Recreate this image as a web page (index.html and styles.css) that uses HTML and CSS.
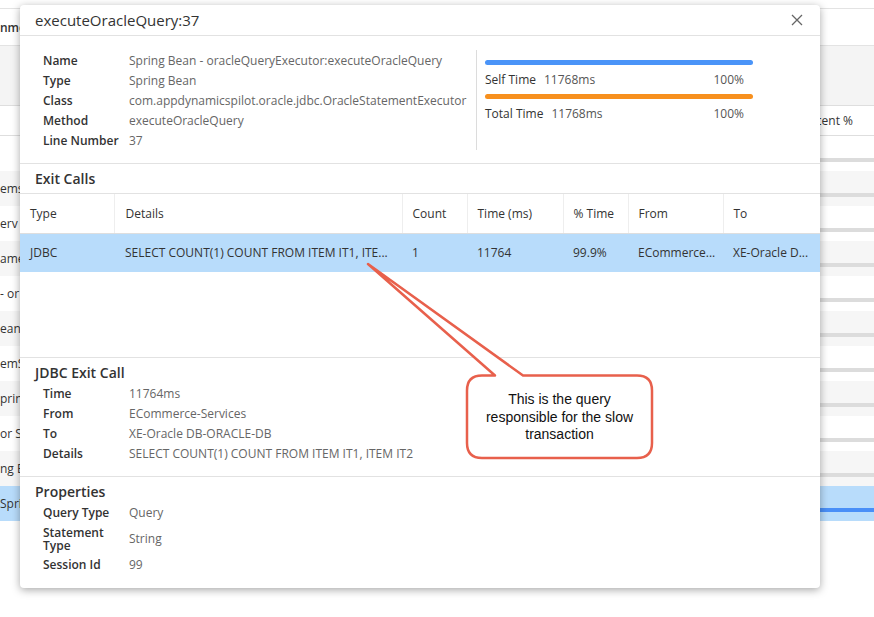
FILE: index.html
```html
<!DOCTYPE html>
<html>
<head>
<meta charset="utf-8">
<title>executeOracleQuery:37</title>
<link rel="stylesheet" href="styles.css">
</head>
<body>
<div class="page">
  <div class="toolbar"><span class="cut">nme</span></div>
  <div class="filters"></div>
  <div class="thead"><span class="pct-head">Percent %</span></div>
  <div class="rows">
    <div class="row"><span class="cut"></span><span class="pct"><i class="track"></i></span></div>
    <div class="row alt"><span class="cut">ems</span><span class="pct"><i class="track"></i></span></div>
    <div class="row"><span class="cut">erv</span><span class="pct"><i class="track"></i></span></div>
    <div class="row alt"><span class="cut">ame</span><span class="pct"><i class="track"></i></span></div>
    <div class="row"><span class="cut">- or</span><span class="pct"><i class="track"></i></span></div>
    <div class="row alt"><span class="cut">ean</span><span class="pct"><i class="track"></i></span></div>
    <div class="row"><span class="cut">emS</span><span class="pct"><i class="track"></i></span></div>
    <div class="row alt"><span class="cut">prin</span><span class="pct"><i class="track"></i></span></div>
    <div class="row"><span class="cut">or Sp</span><span class="pct"><i class="track"></i></span></div>
    <div class="row alt"><span class="cut">ng B</span><span class="pct"><i class="track"></i></span></div>
    <div class="row sel"><span class="cut">Sprin</span><span class="pct"><i class="track fill"></i></span></div>
  </div>
</div>

<div class="modal">
  <div class="modal-head">
    <span class="modal-title">executeOracleQuery:37</span>
    <svg class="close" width="12" height="12" viewBox="0 0 12 12"><path d="M1 1L11 11M11 1L1 11" stroke="#666" stroke-width="1.3" fill="none"/></svg>
  </div>

  <div class="info">
    <div class="props">
      <span class="k">Name</span><span class="v">Spring Bean - oracleQueryExecutor:executeOracleQuery</span>
      <span class="k">Type</span><span class="v">Spring Bean</span>
      <span class="k">Class</span><span class="v">com.appdynamicspilot.oracle.jdbc.OracleStatementExecutor</span>
      <span class="k">Method</span><span class="v">executeOracleQuery</span>
      <span class="k">Line Number</span><span class="v">37</span>
    </div>
    <div class="stats">
      <div class="bar blue"></div>
      <div class="stat-row"><span class="stat-k">Self Time</span><span class="stat-v">11768ms</span><span class="stat-p">100%</span></div>
      <div class="bar orange"></div>
      <div class="stat-row"><span class="stat-k">Total Time</span><span class="stat-v">11768ms</span><span class="stat-p">100%</span></div>
    </div>
  </div>

  <div class="section-title exit-title">Exit Calls</div>
  <div class="table-wrap">
    <table class="calls">
      <thead>
        <tr>
          <th class="c-type">Type</th>
          <th class="c-det">Details</th>
          <th class="c-cnt">Count</th>
          <th class="c-time">Time (ms)</th>
          <th class="c-pct">% Time</th>
          <th class="c-from">From</th>
          <th class="c-to">To</th>
        </tr>
      </thead>
      <tbody>
        <tr class="selected">
          <td>JDBC</td>
          <td>SELECT COUNT(1) COUNT FROM ITEM IT1, ITE...</td>
          <td>1</td>
          <td>11764</td>
          <td>99.9%</td>
          <td>ECommerce...</td>
          <td>XE-Oracle D...</td>
        </tr>
      </tbody>
    </table>
  </div>

  <div class="detail">
    <div class="section-title">JDBC Exit Call</div>
    <div class="props">
      <span class="k">Time</span><span class="v">11764ms</span>
      <span class="k">From</span><span class="v">ECommerce-Services</span>
      <span class="k">To</span><span class="v">XE-Oracle DB-ORACLE-DB</span>
      <span class="k">Details</span><span class="v">SELECT COUNT(1) COUNT FROM ITEM IT1, ITEM IT2</span>
    </div>
  </div>

  <div class="detail last">
    <div class="section-title">Properties</div>
    <div class="props">
      <span class="k">Query Type</span><span class="v">Query</span>
      <span class="k wrap">Statement Type</span><span class="v">String</span>
      <span class="k">Session Id</span><span class="v">99</span>
    </div>
  </div>
</div>

<svg class="callout-shape" width="874" height="617" viewBox="0 0 874 617">
  <path d="M482 375.5 L495 375.5 L368 264 L523 375.5 L637 375.5 Q652 375.5 652 390.5 L652 443 Q652 458 637 458 L482 458 Q467 458 467 443 L467 390.5 Q467 375.5 482 375.5 Z" fill="#fff" stroke="#e8604c" stroke-width="2.5" stroke-linejoin="round"/>
</svg>
<div class="callout-text">This is the query<br>responsible for the slow<br>transaction</div>
</body>
</html>
```

FILE: styles.css
```css
* { box-sizing: border-box; }

body {
  margin: 0;
  width: 874px;
  height: 617px;
  overflow: hidden;
  position: relative;
  background: #fff;
  font-family: "Open Sans", "DejaVu Sans", sans-serif;
  font-size: 12px;
  color: #333;
}

/* background page */
.page { padding-top: 8px; }
.toolbar {
  height: 37px;
  border-top: 1px solid #e3e3e3;
  display: flex;
  align-items: center;
  font-weight: 600;
}
.filters {
  height: 60px;
  border-top: 1px solid #e3e3e3;
  background: #f4f4f4;
}
.thead {
  height: 31px;
  border-top: 1px solid #dedede;
  border-bottom: 1px solid #dedede;
  display: flex;
  align-items: center;
}
.pct-head { margin-left: 797px; white-space: nowrap; }
.row {
  height: 35px;
  display: flex;
}
.row.alt { background: #f6f6f6; }
.row.sel { background: #b8dcfb; }
.cut { line-height: 35px; white-space: nowrap; }
.pct {
  margin-left: auto;
  width: 94px;
  padding-top: 22px;
}
.track {
  display: block;
  height: 4px;
  background: #dcdcdc;
}
.track.fill { background: #4a8ff7; }

/* modal */
.modal {
  position: absolute;
  left: 20px;
  top: 5px;
  width: 800px;
  height: 583px;
  background: #fff;
  border-radius: 4px;
  box-shadow: 0 2px 8px rgba(0, 0, 0, 0.35);
  overflow: hidden;
}
.modal-head {
  height: 31px;
  border-bottom: 1px solid #e2e2e2;
  display: flex;
  align-items: center;
  justify-content: space-between;
  padding: 0 17px 0 15px;
}
.modal-title { font-size: 15px; color: #333; }
.close { display: block; }

.info {
  display: flex;
  padding: 15px 0 12px 23px;
  border-bottom: 1px solid #e2e2e2;
}
.props {
  display: grid;
  grid-template-columns: 80px auto;
  column-gap: 6px;
  align-items: center;
  line-height: 20px;
  align-content: start;
}
.info .props { width: 433px; }
.k { font-weight: 600; color: #333; white-space: nowrap; }
.k.wrap { white-space: normal; line-height: 13px; padding: 3px 0; }
.v { color: #666; white-space: nowrap; }

.stats {
  margin-top: -1px;
  height: 100px;
  width: 277px;
  border-left: 1px solid #dcdcdc;
  padding: 10px 0 0 8px;
}
.bar { height: 5px; width: 268px; border-radius: 3px; }
.bar.blue { background: #4a94f8; }
.bar.orange { background: #f7901e; }
.stat-row {
  display: flex;
  width: 268px;
  line-height: 20px;
  margin: 5px 0 4px;
  padding-right: 9px;
}
.stat-k { color: #333; margin-right: 8px; }
.stat-v { color: #555; }
.stat-p { margin-left: auto; color: #555; }

.section-title {
  font-size: 14px;
  font-weight: 600;
  line-height: 20px;
  padding: 5px 0 0 15px;
  color: #333;
}
.exit-title {
  padding-bottom: 4px;
  border-bottom: 1px solid #e2e2e2;
}

.table-wrap {
  height: 164px;
  border-bottom: 1px solid #e2e2e2;
}
.calls {
  width: 800px;
  border-collapse: collapse;
  table-layout: fixed;
}
.calls th {
  height: 39px;
  font-weight: 400;
  text-align: left;
  padding: 0 10px;
  border-right: 1px solid #eeeeee;
  border-bottom: 1px solid #dedede;
  color: #333;
}
.calls th:last-child { border-right: none; }
.calls td {
  height: 39px;
  padding: 0 10px 1px;
  white-space: nowrap;
  overflow: hidden;
  color: #333;
}
.calls td:nth-child(2) { padding-left: 11px; }
.calls th:nth-child(2) { padding-left: 11px; }
.selected { background: #b8dcfb; }
.c-type { width: 94px; }
.c-det { width: 288px; }
.c-cnt { width: 65px; }
.c-time { width: 96px; }
.c-pct { width: 65px; }
.c-from { width: 95px; }
.c-to { width: 97px; }

.detail {
  padding-bottom: 12px;
  border-bottom: 1px solid #e2e2e2;
}
.detail.last { border-bottom: none; }
.detail .props { padding: 1px 0 0 23px; }

/* annotation */
.callout-shape {
  position: absolute;
  left: 0;
  top: 0;
  pointer-events: none;
}
.callout-text {
  position: absolute;
  left: 467px;
  top: 376px;
  width: 185px;
  height: 83px;
  display: flex;
  align-items: center;
  justify-content: center;
  text-align: center;
  font-family: "Liberation Sans", Arial, sans-serif;
  font-size: 14px;
  line-height: 17.5px;
  color: #111;
}
```
